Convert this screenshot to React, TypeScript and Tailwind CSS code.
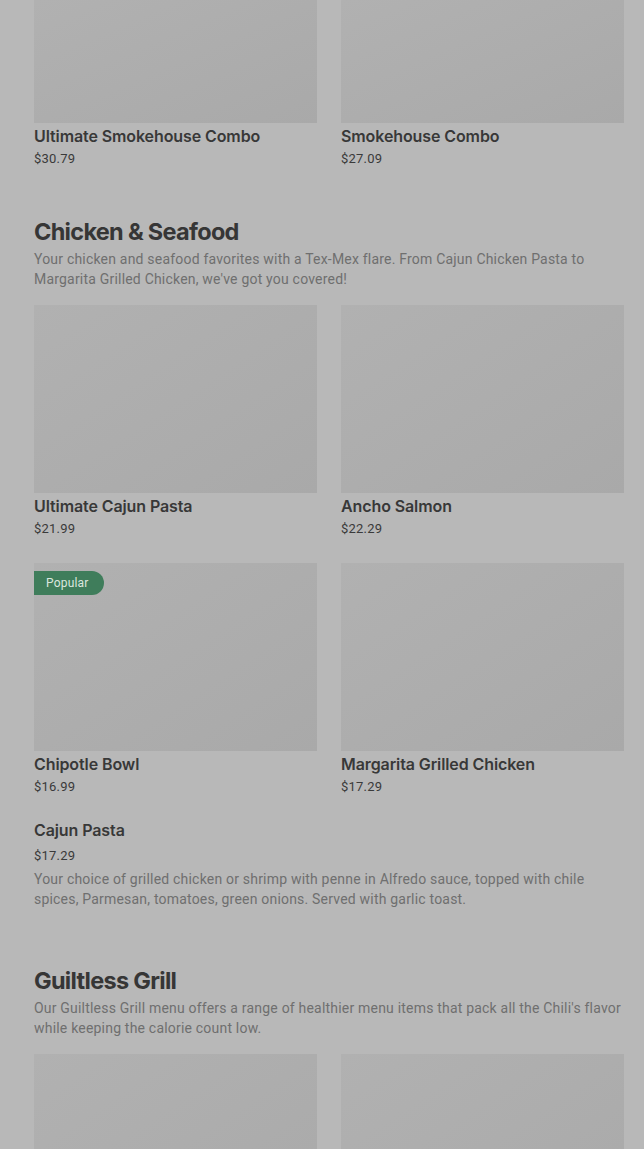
import React from "react";

type Item = { name: string; price: string; popular?: boolean; desc?: string; noImage?: boolean };

const ImageBox = ({ popular, cropped }: { popular?: boolean; cropped?: boolean }) => (
  <div
    className={`relative w-full bg-gradient-to-br from-[#b1b1b1] to-[#a9a9a9] ${cropped ? "h-[123px]" : "h-[188px]"}`}
  >
    {popular && (
      <span className="absolute left-0 top-2 flex h-6 items-center rounded-r-full bg-[#3f7d5b] pl-3 pr-[15px] text-[12px] tracking-[0.2px] text-[#dbe6df] font-['Roboto',sans-serif]">
        Popular
      </span>
    )}
  </div>
);

const MenuCard = ({ item, cropped }: { item: Item; cropped?: boolean }) => (
  <div className="flex flex-col">
    {!item.noImage && <ImageBox popular={item.popular} cropped={cropped} />}
    <h3 className="mt-px text-[16px] leading-6 font-semibold tracking-[-0.1px] text-[#383838] font-['Inter',sans-serif]">
      {item.name}
    </h3>
    <p
      className={`${item.noImage ? "mt-1" : "mt-px"} text-[13px] leading-5 tracking-[0.2px] text-[#3a3a3a] font-['Roboto',sans-serif]`}
    >
      {item.price}
    </p>
    {item.desc && (
      <p className="mt-[3px] text-[14px] leading-5 tracking-[0.2px] text-[#6f6f6f] font-['Roboto',sans-serif]">{item.desc}</p>
    )}
  </div>
);

const SectionHead = ({ title, desc }: { title: string; desc: string }) => (
  <div className="flex flex-col">
    <h2 className="text-[23.5px] leading-8 font-bold tracking-[-0.7px] text-[#363636] font-['Inter',sans-serif]">
      {title}
    </h2>
    <p className="mt-px text-[14px] leading-5 tracking-[0.2px] text-[#6f6f6f] font-['Roboto',sans-serif]">{desc}</p>
  </div>
);

export default function App() {
  return (
    <div className="h-[1149px] overflow-hidden bg-[#b8b8b8] pl-[34px] pr-[20px]">
      {/* top row, scrolled partially out of view */}
      <div className="grid grid-cols-2 gap-x-6">
        <MenuCard cropped item={{ name: "Ultimate Smokehouse Combo", price: "$30.79" }} />
        <MenuCard cropped item={{ name: "Smokehouse Combo", price: "$27.09" }} />
      </div>

      <section className="mt-[47px]">
        <SectionHead
          title="Chicken & Seafood"
          desc="Your chicken and seafood favorites with a Tex-Mex flare. From Cajun Chicken Pasta to Margarita Grilled Chicken, we've got you covered!"
        />
        <div className="mt-4 grid grid-cols-2 gap-x-6 gap-y-6">
          <MenuCard item={{ name: "Ultimate Cajun Pasta", price: "$21.99" }} />
          <MenuCard item={{ name: "Ancho Salmon", price: "$22.29" }} />
          <MenuCard item={{ name: "Chipotle Bowl", price: "$16.99", popular: true }} />
          <MenuCard item={{ name: "Margarita Grilled Chicken", price: "$17.29" }} />
        </div>
        <div className="mt-[20px]">
          <MenuCard
            item={{
              name: "Cajun Pasta",
              price: "$17.29",
              noImage: true,
              desc: "Your choice of grilled chicken or shrimp with penne in Alfredo sauce, topped with chile spices, Parmesan, tomatoes, green onions. Served with garlic toast.",
            }}
          />
        </div>
      </section>

      <section className="mt-[56px]">
        <SectionHead
          title="Guiltless Grill"
          desc="Our Guiltless Grill menu offers a range of healthier menu items that pack all the Chili's flavor while keeping the calorie count low."
        />
        <div className="mt-4 grid grid-cols-2 gap-x-6">
          <ImageBox />
          <ImageBox />
        </div>
      </section>
    </div>
  );
}
